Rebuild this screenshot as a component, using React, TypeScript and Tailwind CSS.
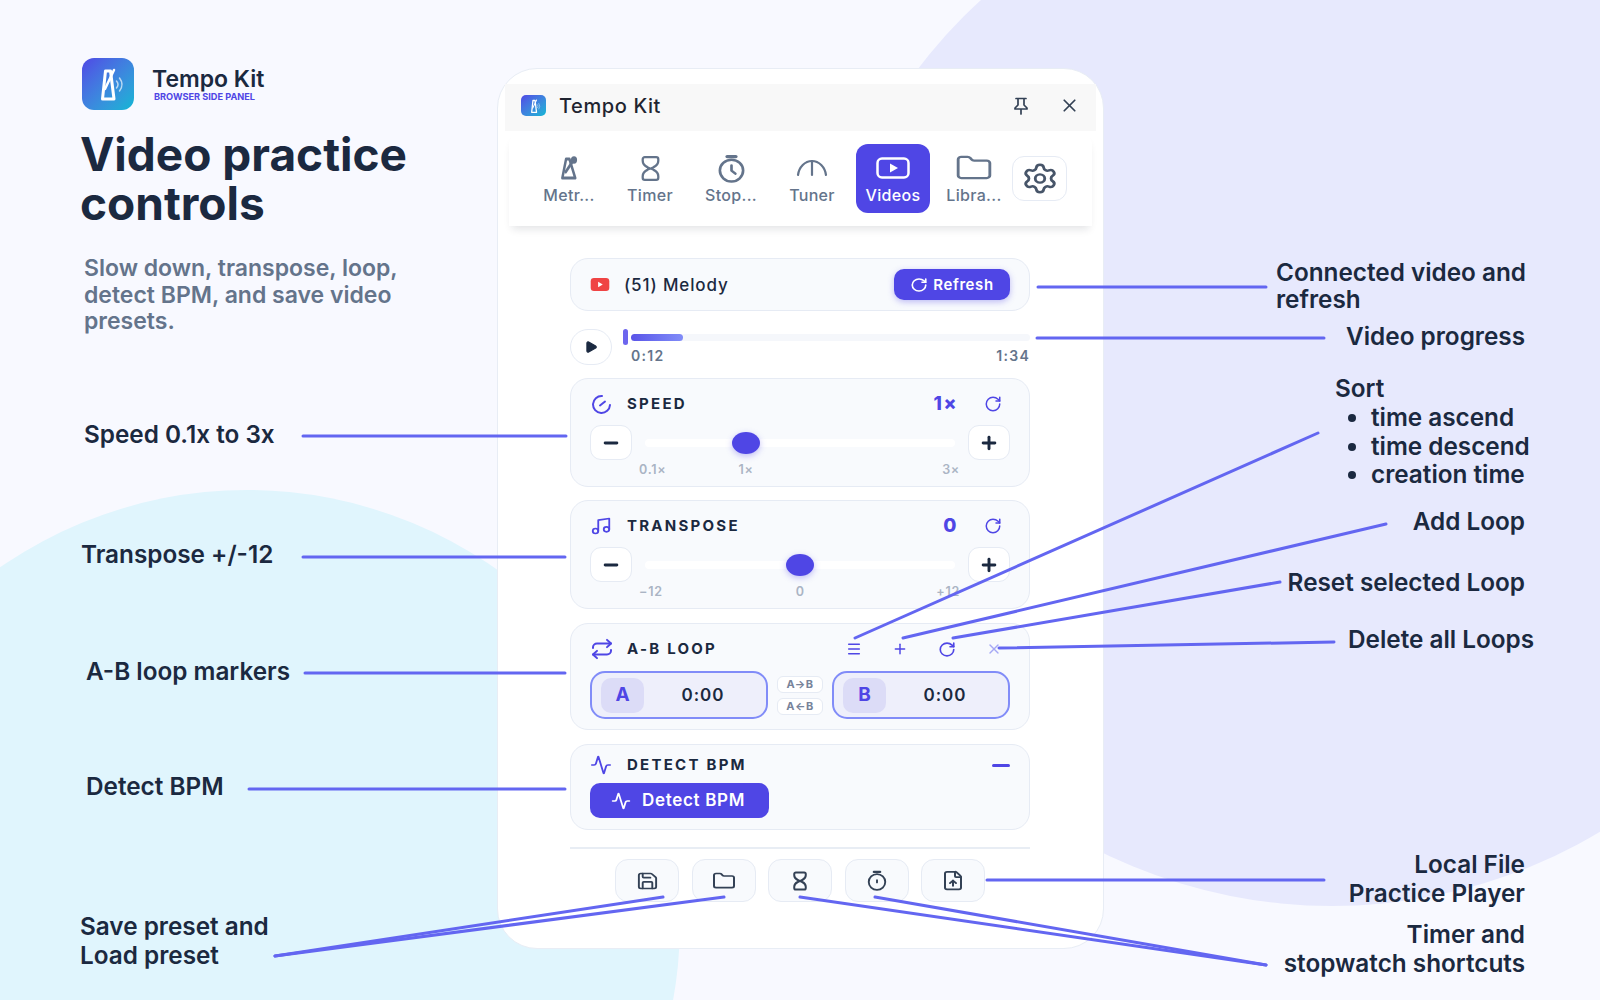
import { Activity, FileUp, Folder, Menu, Minus, Music, Play, Plus, Repeat, RotateCw, Save, Settings, X } from 'lucide-react'
import type { ReactNode } from 'react'

const LINES = [
  [1038, 287, 1266, 287],
  [1037, 338, 1324, 338],
  [303, 436, 566, 436],
  [303, 557, 565, 557],
  [305, 673, 565, 673],
  [249, 789, 565, 789],
  [855, 638, 1318, 433],
  [903, 638, 1386, 524],
  [953, 638, 1280, 582],
  [999, 648, 1334, 642],
  [987, 880, 1324, 880],
  [275, 956, 663, 897],
  [275, 956, 724, 897],
  [800, 897, 1266, 965],
  [875, 897, 1266, 965],
]

function MetronomeIcon({ className }: { className?: string }) {
  return (
    <svg viewBox="0 0 24 24" fill="none" stroke="currentColor" strokeWidth="3" strokeLinejoin="round" strokeLinecap="round" preserveAspectRatio="none" className={className}>
      <path d="M8.500 3h4l7 19H4z" />
      <path d="M8 16L17.500 4" />
      <circle cx="18" cy="4" r="2.200" fill="currentColor" />
    </svg>
  )
}

function LogoMark({ className }: { className?: string }) {
  return (
    <svg viewBox="0 0 52 52" fill="none" stroke="currentColor" strokeLinecap="round" strokeLinejoin="round" className={className}>
      <path d="M23.500 13h5l3.500 28H20.500z" strokeWidth="3" />
      <path d="M23 31L32 12" strokeWidth="2.500" />
      <path d="M34.500 23q3 3.500 0 7" strokeWidth="1.500" opacity="0.65" />
      <path d="M37.500 20q5 6.500 0 13" strokeWidth="1.500" opacity="0.65" />
    </svg>
  )
}

function HourglassIcon({ className, strokeWidth = 2.200 }: { className?: string; strokeWidth?: number }) {
  return (
    <svg viewBox="0 0 20 26" fill="none" stroke="currentColor" strokeWidth={strokeWidth} strokeLinejoin="round" strokeLinecap="round" className={className}>
      <path d="M4.500 2h11a2 2 0 0 1 2 2v1.500c0 3-2 5-4.500 6.200L10.500 13l2.500 1.300c2.500 1.200 4.500 3.200 4.500 6.200V22a2 2 0 0 1-2 2h-11a2 2 0 0 1-2-2v-1.500c0-3 2-5 4.500-6.200L9.500 13 7 11.700C4.500 10.500 2.500 8.500 2.500 5.500V4a2 2 0 0 1 2-2z" />
    </svg>
  )
}

function StopwatchIcon({ className, hand }: { className?: string; hand: string }) {
  return (
    <svg viewBox="0 0 28 28" fill="none" stroke="currentColor" strokeWidth="2.400" strokeLinecap="round" strokeLinejoin="round" preserveAspectRatio="none" className={className}>
      <circle cx="14" cy="16" r="10.500" />
      <path d="M10 2.500h8" strokeWidth="3" />
      <path d={hand} />
    </svg>
  )
}

function TunerIcon({ className }: { className?: string }) {
  return (
    <svg viewBox="0 0 32 18" fill="none" stroke="currentColor" strokeWidth="2.200" strokeLinecap="round" className={className}>
      <path d="M2 16C3 8 9 2 16 2s13 6 14 14" />
      <path d="M16 2v14" />
    </svg>
  )
}

function VideoIcon({ className }: { className?: string }) {
  return (
    <svg viewBox="0 0 34 22" fill="none" className={className}>
      <rect x="1.500" y="1.500" width="31" height="19" rx="4.500" stroke="currentColor" strokeWidth="2.500" />
      <path d="M14 6.500l8 4.500-8 4.500z" fill="currentColor" />
    </svg>
  )
}

function SpeedIcon({ className }: { className?: string }) {
  return (
    <svg viewBox="0 0 22 20" fill="none" stroke="currentColor" strokeWidth="2" strokeLinecap="round" className={className}>
      <path d="M12 2A8.500 8.500 0 1 0 20 11" />
      <path d="M10 11.500l5-4" />
    </svg>
  )
}

function PinIcon({ className }: { className?: string }) {
  return (
    <svg viewBox="0 0 16 18" fill="none" stroke="currentColor" strokeWidth="1.700" strokeLinejoin="round" strokeLinecap="round" className={className}>
      <path d="M3 1.500h10M5 1.500v6.500L2 11v1h12v-1l-3-3V1.500M8 12v5" />
    </svg>
  )
}

function Card({ className, children }: { className: string; children: ReactNode }) {
  return <div className={`rounded-[18px] border border-[#e6ebf4] bg-[#f8fafd] px-[19px] ${className}`}>{children}</div>
}

function SectionTitle({ icon, title }: { icon: ReactNode; title: string }) {
  return (
    <div className="flex items-center">
      <span className="flex w-[37px] items-center text-[#4f46e5]">{icon}</span>
      <span className="text-[15px] font-bold tracking-[0.15em] text-[#1b2940]">{title}</span>
    </div>
  )
}

function Stepper({ children }: { children: ReactNode }) {
  return (
    <button type="button" className="flex h-[35px] w-[42px] shrink-0 items-center justify-center rounded-[11px] border border-[#e6ebf4] bg-white text-[#1b2940]">
      {children}
    </button>
  )
}

function SliderCard({ icon, title, value, thumbClass, ticks }: { icon: ReactNode; title: string; value: string; thumbClass: string; ticks: ReactNode }) {
  return (
    <Card className="h-[109px] pt-[15px]">
      <div className="flex h-[20px] items-center justify-between">
        <SectionTitle icon={icon} title={title} />
        <div className="flex items-center">
          <span className="text-[19px] font-extrabold tracking-[0.08em] text-[#4f46e5]">{value}</span>
          <RotateCw className="ml-[26px] mr-[8px] h-[18px] w-[18px] text-[#4f46e5]" strokeWidth={2} />
        </div>
      </div>
      <div className="mt-[11px] flex items-center">
        <Stepper><Minus className="h-[20px] w-[20px]" strokeWidth={3.500} /></Stepper>
        <div className="relative mx-[13px] h-[8px] flex-1 rounded-full bg-white">
          <div className={`absolute top-[-7px] h-[22px] w-[28px] rounded-[50%] bg-[#4f46e5] shadow-[0_2px_6px_rgba(79,70,229,0.35)] ${thumbClass}`} />
        </div>
        <Stepper><Plus className="h-[20px] w-[20px]" strokeWidth={3.500} /></Stepper>
      </div>
      <div className="mt-[3px] flex h-[14px] items-center text-[12.500px] font-semibold tracking-[0.06em] text-[#aab4c4]">{ticks}</div>
    </Card>
  )
}

function LoopInput({ label }: { label: string }) {
  return (
    <div className="flex h-[48px] w-[178px] items-center rounded-[15px] border-2 border-[#818cf8] bg-[#eeeffb] pl-[9px]">
      <span className="flex h-[35px] w-[43px] items-center justify-center rounded-[10px] bg-[#dcdcf7] pt-[1px] text-[19px] font-bold text-[#4f46e5]">{label}</span>
      <span className="flex-1 pr-[4px] pt-[1px] text-center text-[17px] font-semibold tracking-[0.06em] text-[#1b2940]">0:00</span>
    </div>
  )
}

function Swap({ label }: { label: string }) {
  return (
    <span className="flex h-[17px] w-[46px] items-center justify-center rounded-[6px] border border-[#e6ebf4] bg-white text-[11px] font-bold tracking-[0.04em] text-[#77839a]">{label}</span>
  )
}

function TabItem({ label, children, active = false }: { label: string; children: ReactNode; active?: boolean }) {
  return (
    <div className={`flex h-[69px] w-[74px] shrink-0 flex-col items-center rounded-[12px] ${active ? 'bg-[#4f46e5] text-white' : 'text-[#64748b]'}`}>
      <div className="flex h-[43px] items-center justify-center pt-[5px]">{children}</div>
      <span className="mt-[-4px] text-[16px] font-medium tracking-[0.02em]">{label}</span>
    </div>
  )
}

function ToolButton({ children }: { children: ReactNode }) {
  return (
    <button type="button" className="flex h-[43px] w-[64px] items-center justify-center rounded-[13px] border border-[#e6ebf4] bg-[#f8fafd] text-[#334155]">
      {children}
    </button>
  )
}

function Note({ className, children }: { className: string; children: ReactNode }) {
  return <div className={`absolute text-[24.300px] font-semibold leading-[28.500px] text-[#1b2940] ${className}`}>{children}</div>
}

export default function App() {
  return (
    <div className="relative flex h-[1000px] w-[1600px] overflow-hidden bg-[#f8f9ff] font-['Inter',sans-serif]">
      {/* background blobs */}
      <div className="absolute left-[811px] top-[-136px] h-[1042px] w-[1042px] rounded-full bg-[#e7e9fd]" />
      <div className="absolute left-[-186px] top-[490px] h-[866px] w-[866px] rounded-full bg-[#e0f5fd]" />

      {/* left intro */}
      <div className="relative w-[497px] shrink-0 pl-[80px] pt-[58px]">
        <div className="flex items-center pl-[2px]">
          <div className="flex h-[52px] w-[52px] items-center justify-center rounded-[12px] bg-linear-to-br from-[#4f46e5] to-[#06b6d4] text-white">
            <LogoMark className="h-[52px] w-[52px]" />
          </div>
          <div className="ml-[18px] -mt-[2px]">
            <div className="text-[23px] font-semibold leading-[28px] text-[#1b2940]">Tempo Kit</div>
            <div className="-mt-[1px] ml-[2px] text-[9.200px] font-bold leading-[10px] text-[#4f46e5]">BROWSER SIDE PANEL</div>
          </div>
        </div>
        <h1 className="mt-[20px] text-[46px] font-bold leading-[49px] text-[#1b2940]">Video practice<br />controls</h1>
        <p className="ml-[4px] mt-[27px] text-[23px] font-semibold leading-[26.700px] text-[#64748b]">Slow down, transpose, loop,<br />detect BPM, and save video<br />presets.</p>
      </div>

      {/* side panel */}
      <div className="relative mt-[68px] box-border h-[881px] w-[607px] shrink-0 rounded-[40px] border border-[#e8edf5] bg-white px-[7px] pt-[15px]">
        <div className="flex h-[47px] items-center bg-[#f8f8f8] pb-[4px] pl-[16px]">
          <div className="flex h-[21px] w-[25px] items-center justify-center rounded-[5px] bg-linear-to-br from-[#4f46e5] to-[#06b6d4] text-white">
            <LogoMark className="h-[22px] w-[22px]" />
          </div>
          <span className="ml-[13px] text-[20px] font-medium tracking-[0.03em] text-[#1f2430]">Tempo Kit</span>
          <PinIcon className="ml-auto h-[18px] w-[16px] text-[#334155]" />
          <X className="ml-[30px] mr-[16px] h-[21px] w-[21px] text-[#334155]" strokeWidth={2} />
        </div>
        <div className="relative mx-[4px] flex h-[95px] items-start rounded-t-[14px] bg-white pl-[23px] pt-[13px] shadow-[0_6px_8px_-3px_rgba(15,23,42,0.12)]">
          <div className="flex gap-[7px]">
            <TabItem label="Metr..."><MetronomeIcon className="h-[24px] w-[20px]" /></TabItem>
            <TabItem label="Timer"><HourglassIcon className="h-[27px] w-[21px]" /></TabItem>
            <TabItem label="Stop..."><StopwatchIcon className="h-[29px] w-[31px]" hand="M14 11v5l3.500 3" /></TabItem>
            <TabItem label="Tuner"><TunerIcon className="h-[18px] w-[32px]" /></TabItem>
            <TabItem label="Videos" active><VideoIcon className="h-[22px] w-[34px]" /></TabItem>
            <TabItem label="Libra..."><Folder className="h-[30px] w-[38px]" preserveAspectRatio="none" strokeWidth={1.800} /></TabItem>
          </div>
          <div className="ml-[1px] mt-[12px] flex h-[45px] w-[55px] items-center justify-center rounded-[12px] border border-[#e6ebf4] bg-white text-[#475569]">
            <Settings className="h-[33px] w-[38px]" preserveAspectRatio="none" strokeWidth={1.800} />
          </div>
        </div>

        {/* content */}
        <div className="ml-[65px] mt-[32px] flex w-[460px] flex-col">
          <Card className="flex h-[53px] items-center">
            <svg viewBox="0 0 20 14" className="h-[13px] w-[20px]">
              <rect width="20" height="14" rx="3.500" fill="#ef4444" />
              <path d="M8 4l5 3-5 3z" fill="#fff" />
            </svg>
            <span className="ml-[14px] pt-[2px] text-[17px] font-medium tracking-[0.05em] text-[#1b2940]">(51) Melody</span>
            <button type="button" className="ml-auto flex h-[31px] w-[116px] items-center justify-center gap-[5px] rounded-[10px] bg-[#4f46e5] pt-[1px] text-[15px] font-semibold tracking-[0.04em] text-white shadow-[0_2px_6px_rgba(79,70,229,0.35)]">
              <RotateCw className="h-[16px] w-[18px]" preserveAspectRatio="none" strokeWidth={2.200} />
              Refresh
            </button>
          </Card>

          <div className="mt-[18px] flex h-[36px] items-start">
            <button type="button" className="flex h-[36px] w-[42px] shrink-0 items-center justify-center rounded-full border border-[#e6ebf4] bg-white text-[#1b2940]">
              <Play className="h-[14px] w-[14px]" fill="currentColor" />
            </button>
            <div className="relative ml-[19px] mt-[5px] flex-1">
              <div className="h-[7px] rounded-full bg-[#f5f7fb]">
                <div className="h-[7px] w-[52px] rounded-full bg-linear-to-r from-[#5b54e8] to-[#818cf8]" />
              </div>
              <div className="absolute left-[-8px] top-[-5px] h-[16px] w-[5px] rounded-full bg-[#6d66ee]" />
              <div className="mt-[7px] flex justify-between text-[14px] font-semibold leading-[16px] tracking-[0.09em] text-[#64748b]">
                <span>0:12</span>
                <span>1:34</span>
              </div>
            </div>
          </div>

          <div className="mt-[13px] flex flex-col gap-[13px]">
            <SliderCard
              icon={<SpeedIcon className="h-[20px] w-[22px]" />}
              title="SPEED"
              value="1×"
              thumbClass="left-[87px]"
              ticks={
                <>
                  <span className="ml-[49px]">0.1×</span>
                  <span className="ml-[72px]">1×</span>
                  <span className="ml-auto mr-[50px]">3×</span>
                </>
              }
            />
            <SliderCard
              icon={<Music className="h-[20px] w-[22px]" preserveAspectRatio="none" strokeWidth={2} />}
              title="TRANSPOSE"
              value="0"
              thumbClass="left-[141px]"
              ticks={
                <>
                  <span className="ml-[49px]">−12</span>
                  <span className="ml-[133px]">0</span>
                  <span className="ml-auto mr-[50px]">+12</span>
                </>
              }
            />
            <Card className="mt-[1px] h-[107px] pt-[15px]">
              <div className="flex h-[20px] items-center">
                <SectionTitle icon={<Repeat className="h-[22px] w-[24px]" preserveAspectRatio="none" strokeWidth={2} />} title="A-B LOOP" />
                <div className="ml-auto flex items-center gap-[30px] pr-[8px] text-[#4f46e5]">
                  <Menu className="h-[16px] w-[16px]" strokeWidth={2.200} />
                  <Plus className="h-[16px] w-[16px]" strokeWidth={2.200} />
                  <RotateCw className="h-[17px] w-[18px]" preserveAspectRatio="none" strokeWidth={2.200} />
                  <X className="h-[16px] w-[16px] text-[#a5a8f5]" strokeWidth={2} />
                </div>
              </div>
              <div className="mt-[12px] flex items-center justify-between">
                <LoopInput label="A" />
                <div className="flex flex-col gap-[5px]">
                  <Swap label="A→B" />
                  <Swap label="A←B" />
                </div>
                <LoopInput label="B" />
              </div>
            </Card>
            <Card className="mt-[1px] h-[86px] pt-[10px]">
              <div className="flex h-[20px] items-center justify-between">
                <SectionTitle icon={<Activity className="h-[20px] w-[22px]" preserveAspectRatio="none" strokeWidth={2} />} title="DETECT BPM" />
                <div className="h-[3px] w-[18px] rounded-full bg-[#4f46e5]" />
              </div>
              <button type="button" className="mt-[8px] flex h-[35px] w-[179px] items-center rounded-[10px] bg-[#4f46e5] pl-[21px] pt-[1px] text-[17px] font-semibold tracking-[0.04em] text-white">
                <Activity className="h-[18px] w-[20px]" preserveAspectRatio="none" strokeWidth={2.200} />
                <span className="ml-[11px]">Detect BPM</span>
              </button>
            </Card>
          </div>

          <div className="mt-[17px] h-[2px] bg-[#e8edf4]" />
          <div className="mt-[10px] flex justify-center gap-[12.500px]">
            <ToolButton><Save className="h-[20px] w-[23px]" preserveAspectRatio="none" strokeWidth={2} /></ToolButton>
            <ToolButton><Folder className="h-[20px] w-[24px]" preserveAspectRatio="none" strokeWidth={2} /></ToolButton>
            <ToolButton><HourglassIcon className="h-[20px] w-[16px]" strokeWidth={2.600} /></ToolButton>
            <ToolButton><StopwatchIcon className="h-[21px] w-[22px]" hand="M14 13.500v3" /></ToolButton>
            <ToolButton><FileUp className="h-[21px] w-[24px]" preserveAspectRatio="none" strokeWidth={2} /></ToolButton>
          </div>
        </div>
      </div>

      {/* callouts */}
      <svg className="pointer-events-none absolute left-0 top-0 h-[1000px] w-[1600px]" viewBox="0 0 1600 1000" fill="none" stroke="#6366f1" strokeWidth="3" strokeLinecap="round">
        {LINES.map(([x1, y1, x2, y2], i) => (
          <line key={i} x1={x1} y1={y1} x2={x2} y2={y2} />
        ))}
      </svg>

      <Note className="left-[84px] top-[420px]">Speed 0.1x to 3x</Note>
      <Note className="left-[81px] top-[540px]">Transpose +/-12</Note>
      <Note className="left-[86px] top-[657px]">A-B loop markers</Note>
      <Note className="left-[86px] top-[772px]">Detect BPM</Note>
      <Note className="left-[80px] top-[912px]">Save preset and<br />Load preset</Note>

      <Note className="left-[1276px] top-[258px]">Connected video and<br /><span className="-mt-[2px] block">refresh</span></Note>
      <Note className="right-[75px] top-[322px]">Video progress</Note>
      <Note className="left-[1335px] top-[374px]">Sort</Note>
      <ul className="absolute left-[1371px] top-[403px] list-disc text-[24.300px] font-semibold leading-[28.500px] text-[#1b2940]">
        <li>time ascend</li>
        <li>time descend</li>
        <li>creation time</li>
      </ul>
      <Note className="right-[75px] top-[507px]">Add Loop</Note>
      <Note className="right-[75px] top-[568px]">Reset selected Loop</Note>
      <Note className="left-[1348px] top-[625px]">Delete all Loops</Note>
      <Note className="right-[75px] top-[850px] text-right">Local File<br />Practice Player</Note>
      <Note className="right-[75px] top-[920px] text-right">Timer and<br />stopwatch shortcuts</Note>
    </div>
  )
}
